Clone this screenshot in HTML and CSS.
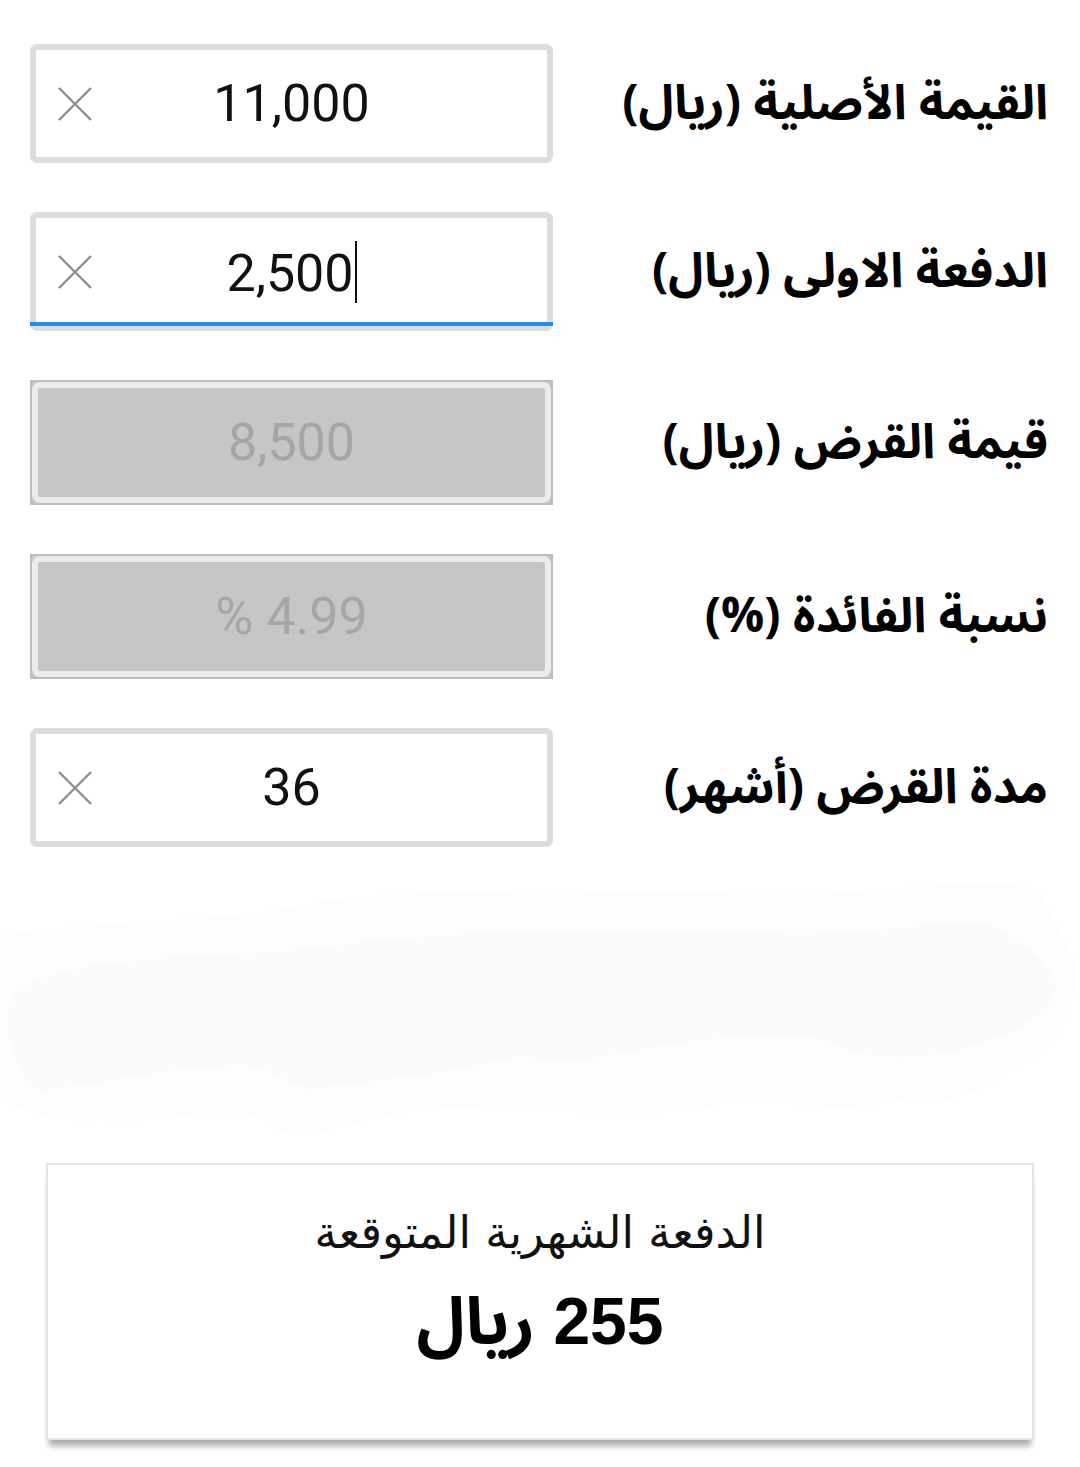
FILE: index.html
```html
<!DOCTYPE html>
<html lang="ar">
<head>
<meta charset="utf-8">
<title>حاسبة القرض</title>
<link rel="stylesheet" href="styles.css">
</head>
<body>
<main class="page">
  <section class="form">
    <div class="row">
      <div class="field">
        <span class="clear"><svg viewBox="0 0 34 34" width="34" height="34"><path d="M1 1 L33 33 M33 1 L1 33" /></svg></span>
        <span class="value">11,000</span>
      </div>
      <label class="label">القيمة الأصلية (ريال)</label>
    </div>
    <div class="row">
      <div class="field focused">
        <span class="clear"><svg viewBox="0 0 34 34" width="34" height="34"><path d="M1 1 L33 33 M33 1 L1 33" /></svg></span>
        <span class="value">2,500<span class="caret"></span></span>
      </div>
      <label class="label">الدفعة الاولى (ريال)</label>
    </div>
    <div class="row">
      <div class="field-disabled">
        <div class="field-disabled-inner"><span class="value">8,500</span></div>
      </div>
      <label class="label">قيمة القرض (ريال)</label>
    </div>
    <div class="row">
      <div class="field-disabled">
        <div class="field-disabled-inner"><span class="value">% 4.99</span></div>
      </div>
      <label class="label">نسبة الفائدة (%)</label>
    </div>
    <div class="row">
      <div class="field">
        <span class="clear"><svg viewBox="0 0 34 34" width="34" height="34"><path d="M1 1 L33 33 M33 1 L1 33" /></svg></span>
        <span class="value">36</span>
      </div>
      <label class="label">مدة القرض (أشهر)</label>
    </div>
  </section>

  <div class="smudge">
    <svg viewBox="0 847 1080 316" width="1080" height="316" preserveAspectRatio="none">
      <path class="smudge-outer" d="M 0 935 C 100 920, 250 920, 300 905 C 400 885, 600 890, 800 895 C 900 890, 1000 875, 1040 890 L 1075 960 C 1080 1010, 1060 1040, 1030 1060 C 980 1090, 950 1110, 900 1100 C 830 1120, 760 1090, 700 1110 C 600 1120, 500 1105, 420 1110 C 350 1120, 300 1150, 270 1125 C 230 1095, 150 1130, 100 1120 C 60 1125, 20 1110, 0 1100 Z"/>
      <path class="smudge-inner" d="M 10 1000 C 40 960, 150 960, 300 950 C 450 930, 600 925, 800 935 C 900 930, 960 920, 990 925 C 1020 940, 1065 970, 1055 995 C 1040 1020, 1010 1035, 975 1045 C 930 1060, 880 1060, 850 1050 C 810 1030, 760 1035, 700 1040 C 640 1045, 580 1070, 520 1055 C 420 1080, 360 1080, 310 1090 C 280 1080, 260 1060, 230 1065 C 150 1070, 100 1085, 40 1090 C 20 1080, 0 1040, 10 1000 Z"/>
    </svg>
  </div>

  <section class="result">
    <div class="result-title">الدفعة الشهرية المتوقعة</div>
    <div class="result-value">255 ريال</div>
  </section>
</main>
</body>
</html>
```
FILE: styles.css
```css
html, body {
  margin: 0;
  padding: 0;
  background: #ffffff;
}

.page {
  width: 1080px;
  height: 1467px;
  overflow: hidden;
  display: flex;
  flex-direction: column;
  font-family: "Noto Sans Arabic", "Noto Sans", "DejaVu Sans", sans-serif;
}

.form {
  display: flex;
  flex-direction: column;
  gap: 49px;
  padding: 44px 32px 0 30px;
}

.row {
  display: flex;
  justify-content: space-between;
  align-items: center;
}

.label {
  direction: rtl;
  font-size: 48px;
  font-weight: 700;
  color: #000;
  white-space: nowrap;
}

.field {
  position: relative;
  box-sizing: border-box;
  width: 523px;
  height: 119px;
  border: 6px solid #dcdcdc;
  border-radius: 7px;
  background: #fff;
  display: flex;
  align-items: center;
  justify-content: center;
}

.field.focused::after {
  content: "";
  position: absolute;
  left: -6px;
  right: -6px;
  bottom: -1px;
  height: 4px;
  background: #1e8ff0;
}

.clear {
  position: absolute;
  left: 22px;
  top: 37px;
  width: 34px;
  height: 34px;
}

.clear svg {
  display: block;
}

.clear path {
  stroke: #8f8f8f;
  stroke-width: 2.4;
  fill: none;
}

.value {
  font-family: Roboto, "Liberation Sans", sans-serif;
  font-size: 52px;
  color: #111;
  line-height: 1;
  position: relative;
}

.caret {
  display: inline-block;
  width: 2px;
  height: 62px;
  background: #111;
  vertical-align: -12px;
  margin-left: 1px;
}

.field-disabled {
  box-sizing: border-box;
  width: 523px;
  height: 125px;
  border: 2px solid #bdbdbd;
  background: #c6c6c6;
}

.field-disabled-inner {
  box-sizing: border-box;
  height: 100%;
  border: 6px solid #ececec;
  border-radius: 8px;
  background: #c6c6c6;
  display: flex;
  align-items: center;
  justify-content: center;
}

.field-disabled-inner .value {
  color: #a6a6a6;
}

.smudge {
  height: 316px;
  flex: none;
}

.smudge svg {
  display: block;
}

.smudge-outer {
  fill: #fdfdfd;
}

.smudge-inner {
  fill: #fafafa;
}

.result {
  box-sizing: border-box;
  margin: 0 46px;
  height: 277px;
  border: 2px solid #e4e4e4;
  background: #fff;
  box-shadow: 0 9px 6px -3px rgba(0, 0, 0, 0.33);
  direction: rtl;
  text-align: center;
  padding-top: 42px;
}

.result-title {
  font-family: "DejaVu Sans", "Noto Sans", sans-serif;
  font-size: 45px;
  line-height: 52px;
  color: #111;
}

.result-value {
  font-family: "Liberation Sans", "Noto Sans Arabic", "Noto Sans", sans-serif;
  font-size: 66px;
  font-weight: 700;
  line-height: 80px;
  margin-top: 22px;
  color: #000;
}
```
